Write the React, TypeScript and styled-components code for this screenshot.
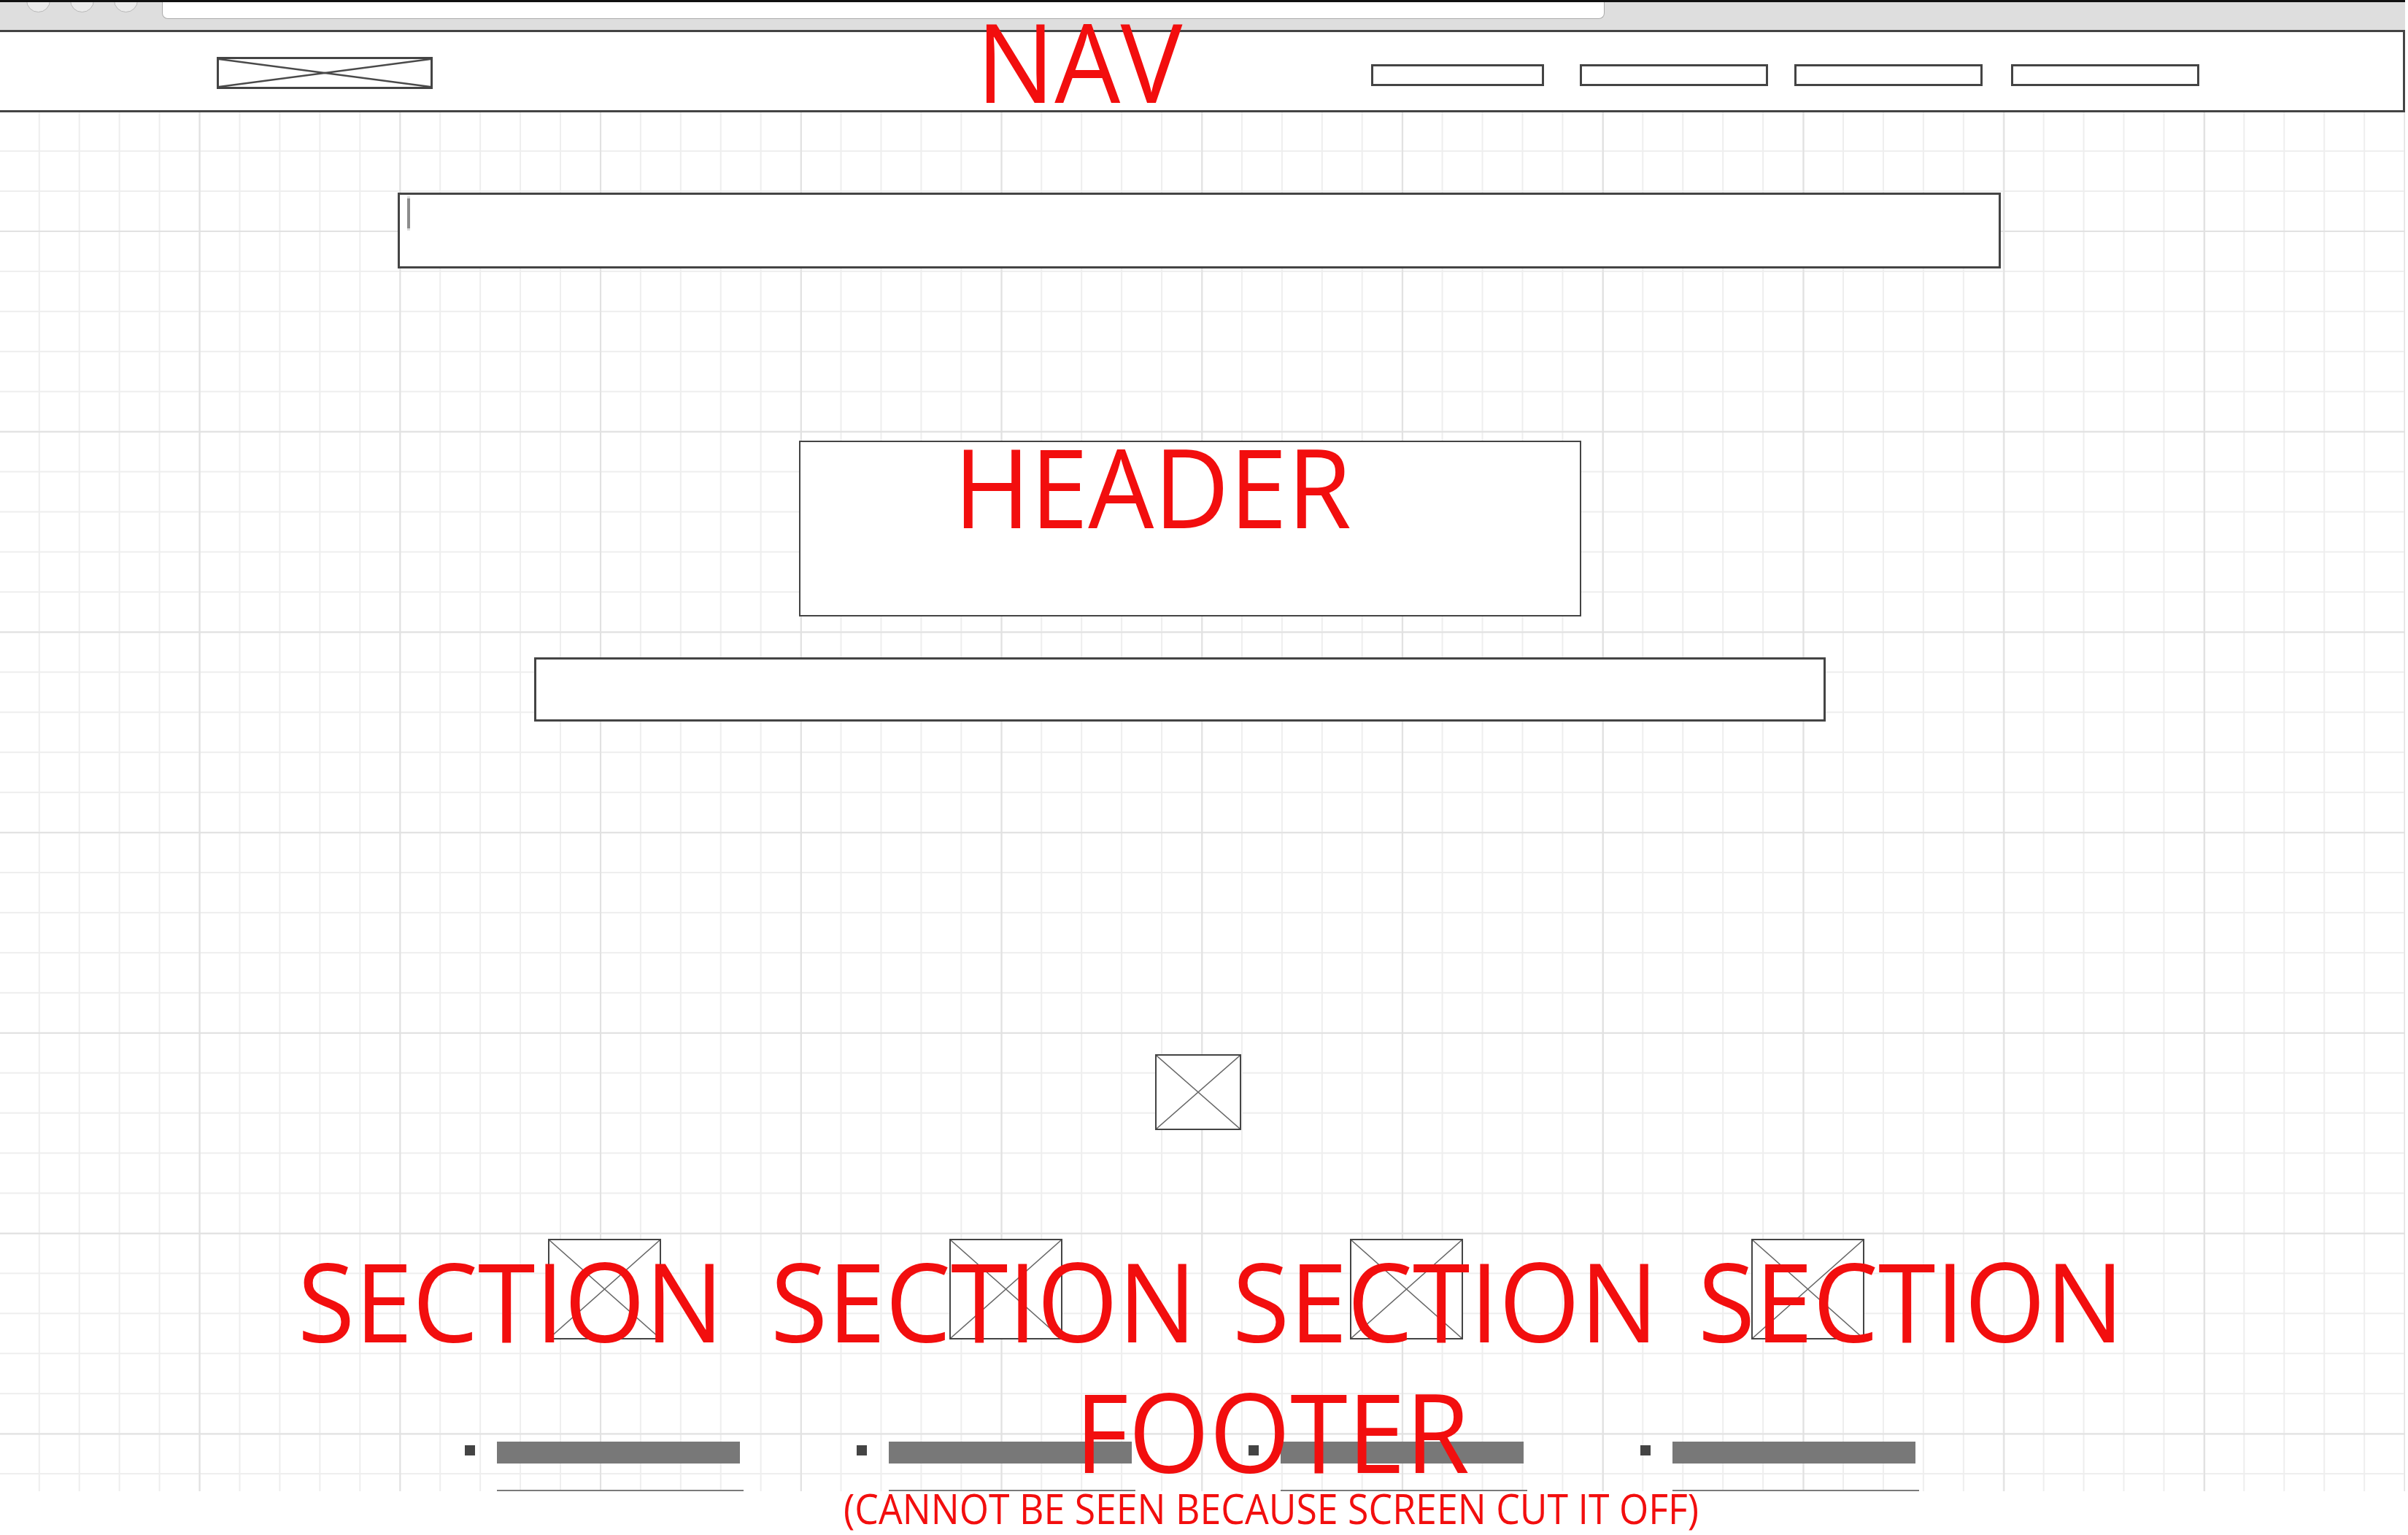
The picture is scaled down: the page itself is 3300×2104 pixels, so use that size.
import React from 'react';
import styled, { createGlobalStyle } from 'styled-components';

const RED = '#f20e0e';
const INK = '#444444';

const GlobalStyle = createGlobalStyle`
  html, body {
    margin: 0;
    padding: 0;
    background: #ffffff;
  }
  body {
    width: 3300px;
    height: 2104px;
    overflow: hidden;
    font-family: 'Open Sans', 'Noto Sans', sans-serif;
  }
`;

const Frame = styled.div`
  width: 3296px;
`;

// browser window chrome
const Chrome = styled.div`
  height: 38px;
  background: #dedede;
  border-top: 3px solid #111111;
  display: flex;
  align-items: flex-start;
  overflow: hidden;
  padding-left: 36px;
`;

const Dot = styled.span`
  flex: none;
  width: 33px;
  height: 33px;
  margin-top: -19px;
  box-sizing: border-box;
  border-radius: 50%;
  border: 1.5px solid #b8b8b8;
  background: #ebebeb;
  & + & {
    margin-left: 27px;
  }
`;

const Address = styled.div`
  flex: none;
  margin-left: 33px;
  width: 1975px;
  height: 22px;
  background: #ffffff;
  border: 1.5px solid #aaaaaa;
  border-top: none;
  border-radius: 0 0 8px 8px;
`;

// the grid paper the wireframe is drawn on
const Canvas = styled.div`
  height: 2003px;
  background-color: #ffffff;
  background-image: linear-gradient(to right, #e1e1e1 2px, transparent 2px),
    linear-gradient(to bottom, #e1e1e1 2px, transparent 2px),
    linear-gradient(to right, #eeeeee 2px, transparent 2px),
    linear-gradient(to bottom, #eeeeee 2px, transparent 2px);
  background-size: 274.75px 100%, 100% 274.75px, 54.95px 100%, 100% 54.95px;
  background-position: -2.15px 0, 0 0.3px, -2.15px 0, 0 0.3px;
  display: flow-root;
`;

const Nav = styled.nav`
  position: relative;
  height: 107px;
  background: #ffffff;
  border-top: 3px solid ${INK};
  border-bottom: 3px solid ${INK};
  border-right: 3px solid ${INK};
  display: flex;
  align-items: flex-start;
  padding-left: 297px;
  padding-right: 279px;
`;

const Logo = styled.div`
  flex: none;
  margin-top: 34px;
  width: 296px;
  height: 44px;
  box-sizing: border-box;
  border: 3px solid ${INK};
  background: #ffffff;
`;

const NavLink = styled.div<{ $w: number; $gap?: number }>`
  flex: none;
  margin-top: 44px;
  margin-left: ${(p) => (p.$gap === undefined ? 'auto' : `${p.$gap}px`)};
  width: ${(p) => p.$w}px;
  height: 30px;
  box-sizing: border-box;
  border: 3px solid ${INK};
  background: #ffffff;
`;

const Search = styled.div`
  margin: 110px 0 0 545px;
  width: 2197px;
  height: 104px;
  box-sizing: border-box;
  border: 3px solid ${INK};
  background: #ffffff;
  padding: 2px 0 0 10px;
`;

const Caret = styled.div`
  width: 4px;
  height: 47px;
  box-sizing: border-box;
  background: #8c8c8c;
  border-top: 3px solid #dcdcdc;
  border-bottom: 3px solid #dcdcdc;
`;

const HeaderBox = styled.header`
  margin: 236px 0 0 1095px;
  width: 1072px;
  height: 241px;
  box-sizing: border-box;
  border: 2px solid ${INK};
  background: #ffffff;
  padding: 4px 0 0 210px;
`;

const SubBar = styled.div`
  margin: 56px 0 0 732px;
  width: 1770px;
  height: 88px;
  box-sizing: border-box;
  border: 3px solid ${INK};
  background: #ffffff;
`;

const Picture = styled.div<{ $w: number; $h: number }>`
  flex: none;
  width: ${(p) => p.$w}px;
  height: ${(p) => p.$h}px;
  box-sizing: border-box;
  border: 2px solid ${INK};
  background: #ffffff;
`;

const HeroImage = styled.div`
  margin: 456px 0 0 1583px;
  width: 118px;
`;

const SectionRow = styled.section`
  position: relative;
  margin-top: 149px;
  padding-left: 751px;
  display: flex;
  gap: 394.5px;
`;

const FooterRow = styled.footer`
  position: relative;
  margin-top: 140px;
  padding-left: 637px;
  display: flex;
  gap: 155px;
`;

const FooterItem = styled.div`
  flex: none;
  display: flex;
  align-items: flex-start;
`;

const Bullet = styled.span`
  flex: none;
  width: 14px;
  height: 14px;
  margin-top: 5px;
  background: ${INK};
`;

const ItemText = styled.div`
  margin-left: 30px;
  display: flex;
  flex-direction: column;
`;

const TextBar = styled.div`
  width: 333px;
  height: 30px;
  background: #787878;
`;

const Underline = styled.div`
  margin-top: 36px;
  width: 338px;
  height: 2px;
  background: #7a7a7a;
`;

// red hand-written style annotations
const Note = styled.span<{ $size?: number; $squeeze?: number }>`
  display: inline-block;
  font-family: 'Open Sans', 'Noto Sans', sans-serif;
  font-weight: 400;
  font-size: ${(p) => p.$size ?? 150}px;
  line-height: 0.75;
  color: ${RED};
  white-space: nowrap;
  transform: scaleX(${(p) => p.$squeeze ?? 0.95});
  transform-origin: 0 0;
`;

const FloatNote = styled(Note)<{ $x: number; $y: number }>`
  position: absolute;
  left: ${(p) => p.$x}px;
  top: ${(p) => p.$y}px;
  z-index: 2;
`;

const Caption = styled.div`
  margin-top: 2px;
  padding-left: 1156px;
`;

const CrossSvg = styled.svg`
  display: block;
  width: 100%;
  height: 100%;
`;

function Cross({ color, width }: { color: string; width: number }) {
  return (
    <CrossSvg viewBox="0 0 100 100" preserveAspectRatio="none">
      <line x1="0" y1="0" x2="100" y2="100" stroke={color} strokeWidth={width} vectorEffect="non-scaling-stroke" />
      <line x1="100" y1="0" x2="0" y2="100" stroke={color} strokeWidth={width} vectorEffect="non-scaling-stroke" />
    </CrossSvg>
  );
}

const navLinks = [
  { w: 237 },
  { w: 258, gap: 49 },
  { w: 258, gap: 36 },
  { w: 258, gap: 39 },
];

const sectionLabels = [408, 1056, 1689, 2327];

export default function App() {
  return (
    <>
      <GlobalStyle />
      <Frame>
        <Chrome>
          <Dot />
          <Dot />
          <Dot />
          <Address />
        </Chrome>
        <Canvas>
          <Nav>
            <Logo>
              <Cross color="#4a4a4a" width={2.5} />
            </Logo>
            {navLinks.map((l, i) => (
              <NavLink key={i} $w={l.w} $gap={l.gap} />
            ))}
            <FloatNote $x={1338} $y={-17.4}>
              NAV
            </FloatNote>
          </Nav>

          <Search>
            <Caret />
          </Search>

          <HeaderBox>
            <Note>HEADER</Note>
          </HeaderBox>

          <SubBar />

          <HeroImage>
            <Picture $w={118} $h={104}>
              <Cross color="#666666" width={1.5} />
            </Picture>
          </HeroImage>

          <SectionRow>
            {sectionLabels.map((_, i) => (
              <Picture key={i} $w={155} $h={138}>
                <Cross color="#666666" width={1.5} />
              </Picture>
            ))}
            {sectionLabels.map((x, i) => (
              <FloatNote key={i} $x={x} $y={27.6}>
                SECTION
              </FloatNote>
            ))}
          </SectionRow>

          <FooterRow>
            {[0, 1, 2, 3].map((i) => (
              <FooterItem key={i}>
                <Bullet />
                <ItemText>
                  <TextBar />
                  <Underline />
                </ItemText>
              </FooterItem>
            ))}
            <FloatNote $x={1473} $y={-71.4}>
              FOOTER
            </FloatNote>
          </FooterRow>
        </Canvas>
        <Caption>
          <Note $size={56} $squeeze={0.925}>
            (CANNOT BE SEEN BECAUSE SCREEN CUT IT OFF)
          </Note>
        </Caption>
      </Frame>
    </>
  );
}
